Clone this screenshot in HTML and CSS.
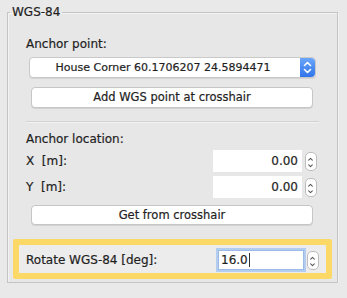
FILE: index.html
```html
<!DOCTYPE html>
<html lang="en">
<head>
  <meta charset="UTF-8" />
  <title>WGS-84</title>
  <link rel="stylesheet" href="styles.css">
</head>
<body>
  <fieldset class="group">
    <legend>WGS-84</legend>

    <div class="section">
      <div class="label">Anchor point:</div>
      <div class="popup">
        <span class="popup-text">House Corner 60.1706207 24.5894471</span>
        <span class="popup-arrows">
          <svg width="15" height="19" viewBox="0 0 15 19">
            <path d="M4.5 7.5 L7.5 4.5 L10.5 7.5 M4.5 11.5 L7.5 14.5 L10.5 11.5" fill="none" stroke="#fff" stroke-width="1.6" stroke-linecap="round" stroke-linejoin="round"/>
          </svg>
        </span>
      </div>
      <div class="btn">Add WGS point at crosshair</div>
    </div>

    <div class="sep"></div>

    <div class="section second">
      <div class="label">Anchor location:</div>
      <div class="row">
        <span class="label grow">X&nbsp; [m]:</span>
        <div class="field">0.00</div>
        <span class="stepper">
          <svg width="12" height="19" viewBox="0 0 12 19">
            <path d="M4 7 L6 5 L8 7 M4 12 L6 14 L8 12" fill="none" stroke="#555" stroke-width="1.1" stroke-linecap="round" stroke-linejoin="round"/>
          </svg>
        </span>
      </div>
      <div class="row">
        <span class="label grow">Y&nbsp; [m]:</span>
        <div class="field">0.00</div>
        <span class="stepper">
          <svg width="12" height="19" viewBox="0 0 12 19">
            <path d="M4 7 L6 5 L8 7 M4 12 L6 14 L8 12" fill="none" stroke="#555" stroke-width="1.1" stroke-linecap="round" stroke-linejoin="round"/>
          </svg>
        </span>
      </div>
      <div class="btn">Get from crosshair</div>
    </div>

    <!-- highlighted row -->
    <div class="highlight">
      <div class="row">
        <span class="label grow">Rotate WGS-84 [deg]:</span>
        <div class="field focus"><span>16.0</span><span class="caret"></span></div>
        <span class="stepper">
          <svg width="12" height="19" viewBox="0 0 12 19">
            <path d="M4 7 L6 5 L8 7 M4 12 L6 14 L8 12" fill="none" stroke="#555" stroke-width="1.1" stroke-linecap="round" stroke-linejoin="round"/>
          </svg>
        </span>
      </div>
    </div>
  </fieldset>
</body>
</html>
```

FILE: styles.css
```css
body {
  margin: 0;
  background: #e9e9e9;
  font-family: 'DejaVu Sans', sans-serif;
  color: #1f1f1f;
  -webkit-text-stroke: 0.2px #1f1f1f;
}

.group {
  margin: 5px 9px 0 7px;
  padding: 0 0 12px 0;
  border: 1px solid #c4c4c4;
  box-shadow: inset 1px 1px 0 #f3f3f3, 1px 1px 0 #f3f3f3;
  background: #e7e7e7;
  height: 278px;
  box-sizing: border-box;
}

.group legend {
  margin-left: 2px;
  padding: 0 2px;
  font-size: 12px;
  line-height: 14px;
}

.section {
  padding: 17px 20px 0 18px;
}

.section.second {
  padding-top: 9px;
}

.label {
  font-size: 12px;
  line-height: 16px;
}

.grow {
  flex: 1;
}

.popup {
  display: flex;
  align-items: center;
  height: 19px;
  margin: 5px 1px 0 3px;
  background: #fff;
  border: 1px solid #c9c9c9;
  border-radius: 4px;
  box-shadow: 0 1px 0 #d4d4d4;
}

.popup-text {
  flex: 1;
  text-align: center;
  font-size: 11px;
  padding-right: 4px;
}

.popup-arrows {
  display: flex;
  width: 15px;
  height: 19px;
  border-radius: 0 4px 4px 0;
  background: linear-gradient(#6aa6fa, #2f74ea);
}

.btn {
  height: 19px;
  margin: 9px 4px 0 5px;
  background: #fff;
  border: 1px solid #c6c6c6;
  border-radius: 4px;
  box-shadow: 0 1px 0 #d2d2d2;
  font-size: 11.5px;
  line-height: 19px;
  text-align: center;
}

.section.second .btn {
  margin-top: 7px;
  height: 18px;
  line-height: 18px;
}

.sep {
  height: 1px;
  margin: 13px 18px 0 18px;
  background: #d2d2d2;
  box-shadow: 0 1px 0 #f2f2f2;
}

.row {
  display: flex;
  align-items: center;
  margin-top: 3px;
}

.row + .row {
  margin-top: 4px;
}

.field {
  width: 89px;
  height: 22px;
  box-sizing: border-box;
  background: #fff;
  font-size: 12px;
  line-height: 22px;
  text-align: right;
  padding-right: 4px;
}

.stepper {
  display: flex;
  width: 12px;
  height: 19px;
  margin-left: 3px;
  border: 1px solid #bdbdbd;
  border-radius: 5px;
  background: #fff;
  box-sizing: border-box;
  overflow: hidden;
}

.stepper svg {
  margin-left: -1px;
}

.highlight {
  margin: 14px 5px 0 5px;
  border: 6px solid #fcd967;
  border-radius: 2px;
  background: #ececec;
  padding: 5px 7px 3px 7px;
}

.highlight .row {
  margin-top: 0;
}

.field.focus {
  width: 86px;
  height: 20px;
  line-height: 18px;
  text-align: left;
  padding: 0 0 0 2px;
  border: 1px solid #9bbbe6;
  box-shadow: 0 0 0 2px #b3cdf0;
  display: flex;
  align-items: center;
}

.caret {
  display: inline-block;
  width: 1px;
  height: 14px;
  margin-left: 1px;
  background: #333;
}
```
